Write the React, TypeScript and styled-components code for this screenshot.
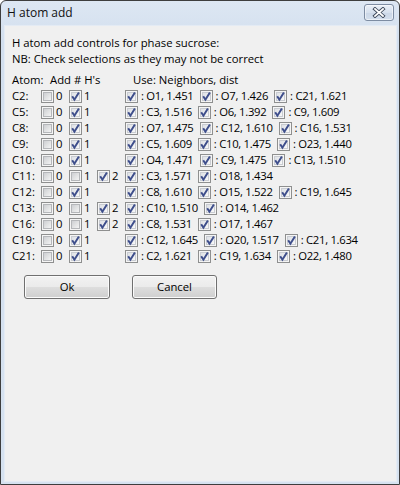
import React from 'react';
import styled, { createGlobalStyle } from 'styled-components';

const Global = createGlobalStyle`
  html, body { margin: 0; padding: 0; background: #ffffff; }
  body {
    font-family: "Open Sans", "Noto Sans", sans-serif;
    font-size: 11.3px;
    color: #000;
  }
  * { box-sizing: border-box; }
`;

const Window = styled.div`
  width: 400px;
  height: 485px;
  border: 1px solid #3e3e3e;
  border-radius: 6px 6px 0 0;
  background: linear-gradient(#dde7f3, #d3dfee 40px, #d6e2f0);
  display: flex;
  flex-direction: column;
  overflow: hidden;
`;

const TitleBar = styled.div`
  height: 24px;
  flex: none;
  display: flex;
  align-items: flex-start;
  justify-content: space-between;
  padding: 0 5px 0 6px;
`;

const Title = styled.div`
  font-size: 12px;
  line-height: 24px;
  color: #111;
`;

const CloseButton = styled.div`
  margin-top: 3px;
  width: 30px;
  height: 17px;
  border: 1px solid #7d8ca2;
  border-radius: 3px;
  background: linear-gradient(#e9eff7, #d7e1ee 50%, #cbd7e7 51%, #d4dfed);
  box-shadow: inset 0 0 0 1px rgba(255, 255, 255, 0.55);
  display: flex;
  align-items: center;
  justify-content: center;
`;

const Client = styled.div`
  flex: 1;
  margin: 0 2px 2px 3px;
  border: 1px solid #e4ebf4;
  background: #f0f0f0;
  padding: 9px 8px 0 7px;
  display: flex;
  flex-direction: column;
`;

const Line = styled.div`
  height: 16px;
  line-height: 16px;
  white-space: nowrap;
`;

const Header = styled.div`
  margin-top: 5px;
  height: 16px;
  line-height: 16px;
  display: grid;
  grid-template-columns: 38px 83px 1fr;
  white-space: nowrap;
`;

const Row = styled.div`
  height: 16px;
  display: flex;
  align-items: center;
  white-space: nowrap;
`;

const AtomLabel = styled.span`
  width: 29px;
  flex: none;
  line-height: 16px;
`;

const HGroup = styled.div`
  width: 84px;
  flex: none;
  display: flex;
  align-items: center;
`;

const HOption = styled.label`
  width: 28px;
  flex: none;
  display: flex;
  align-items: center;
  gap: 2px;
  line-height: 16px;
`;

const Neighbors = styled.div`
  display: flex;
  align-items: center;
  gap: 6px;
`;

const Neighbor = styled.label`
  display: flex;
  align-items: center;
  gap: 3px;
  line-height: 16px;
`;

const NeighborText = styled.span`
  letter-spacing: -0.3px;
`;

const Box = styled.span`
  width: 13px;
  height: 13px;
  flex: none;
  display: inline-flex;
`;

const ButtonRow = styled.div`
  margin-top: 11px;
  padding-left: 12px;
  display: flex;
  gap: 22px;
`;

const PushButton = styled.button<{ $w: number }>`
  width: ${(p) => p.$w}px;
  height: 24px;
  border: 1px solid #707070;
  border-radius: 3px;
  background: linear-gradient(#f2f2f2 0%, #ebebeb 48%, #dddddd 52%, #cfcfcf 100%);
  box-shadow: inset 0 0 0 1px #fbfbfb;
  font-family: "Open Sans", "Noto Sans", sans-serif;
  font-size: 11.3px;
  color: #000;
  padding: 0;
  line-height: 20px;
`;

const CheckBox = ({ checked }: { checked: boolean }) => (
  <Box>
    <svg width="13" height="13" viewBox="0 0 13 13">
      <defs>
        <linearGradient id="cbOff" x1="0" y1="0" x2="1" y2="1">
          <stop offset="0" stopColor="#cbcdd0" />
          <stop offset="1" stopColor="#f6f6f6" />
        </linearGradient>
        <linearGradient id="cbOn" x1="0" y1="0" x2="1" y2="1">
          <stop offset="0" stopColor="#dcdfe4" />
          <stop offset="1" stopColor="#fafafa" />
        </linearGradient>
      </defs>
      <rect x="0.5" y="0.5" width="12" height="12" fill="#f5f5f5" stroke="#8e8f8f" />
      <rect
        x="2.5"
        y="2.5"
        width="8"
        height="8"
        fill={checked ? 'url(#cbOn)' : 'url(#cbOff)'}
        stroke={checked ? '#c9ccd2' : '#b5b7ba'}
      />
      {checked && (
        <path
          d="M3.2 6.3 L5.4 9.7 L9.9 2.5"
          stroke="#3f4f8c"
          strokeWidth="2"
          fill="none"
          strokeLinejoin="miter"
        />
      )}
    </svg>
  </Box>
);

const CloseGlyph = () => (
  <svg width="14" height="11" viewBox="0 0 14 11">
    <path d="M3 2 L11 9 M11 2 L3 9" stroke="#3e4a5c" strokeWidth="3.6" strokeLinecap="square" />
    <path d="M3 2 L11 9 M11 2 L3 9" stroke="#ffffff" strokeWidth="1.8" strokeLinecap="square" />
  </svg>
);

type AtomRow = { atom: string; hs: number[]; sel: number; n: string[] };

const rows: AtomRow[] = [
  { atom: 'C2', hs: [0, 1], sel: 1, n: ['O1, 1.451', 'O7, 1.426', 'C21, 1.621'] },
  { atom: 'C5', hs: [0, 1], sel: 1, n: ['C3, 1.516', 'O6, 1.392', 'C9, 1.609'] },
  { atom: 'C8', hs: [0, 1], sel: 1, n: ['O7, 1.475', 'C12, 1.610', 'C16, 1.531'] },
  { atom: 'C9', hs: [0, 1], sel: 1, n: ['C5, 1.609', 'C10, 1.475', 'O23, 1.440'] },
  { atom: 'C10', hs: [0, 1], sel: 1, n: ['O4, 1.471', 'C9, 1.475', 'C13, 1.510'] },
  { atom: 'C11', hs: [0, 1, 2], sel: 2, n: ['C3, 1.571', 'O18, 1.434'] },
  { atom: 'C12', hs: [0, 1], sel: 1, n: ['C8, 1.610', 'O15, 1.522', 'C19, 1.645'] },
  { atom: 'C13', hs: [0, 1, 2], sel: 2, n: ['C10, 1.510', 'O14, 1.462'] },
  { atom: 'C16', hs: [0, 1, 2], sel: 2, n: ['C8, 1.531', 'O17, 1.467'] },
  { atom: 'C19', hs: [0, 1], sel: 1, n: ['C12, 1.645', 'O20, 1.517', 'C21, 1.634'] },
  { atom: 'C21', hs: [0, 1], sel: 1, n: ['C2, 1.621', 'C19, 1.634', 'O22, 1.480'] },
];

export default function App() {
  return (
    <>
      <Global />
      <Window>
        <TitleBar>
          <Title>H atom add</Title>
          <CloseButton>
            <CloseGlyph />
          </CloseButton>
        </TitleBar>
        <Client>
          <Line>H atom add controls for phase sucrose:</Line>
          <Line>NB: Check selections as they may not be correct</Line>
          <Header>
            <span>Atom:</span>
            <span>Add # H's</span>
            <span>Use: Neighbors, dist</span>
          </Header>
          {rows.map((r) => (
            <Row key={r.atom}>
              <AtomLabel>{r.atom}:</AtomLabel>
              <HGroup>
                {r.hs.map((h) => (
                  <HOption key={h}>
                    <CheckBox checked={h === r.sel} />
                    <span>{h}</span>
                  </HOption>
                ))}
              </HGroup>
              <Neighbors>
                {r.n.map((t) => (
                  <Neighbor key={t}>
                    <CheckBox checked />
                    <NeighborText>: {t}</NeighborText>
                  </Neighbor>
                ))}
              </Neighbors>
            </Row>
          ))}
          <ButtonRow>
            <PushButton $w={86}>Ok</PushButton>
            <PushButton $w={85}>Cancel</PushButton>
          </ButtonRow>
        </Client>
      </Window>
    </>
  );
}
